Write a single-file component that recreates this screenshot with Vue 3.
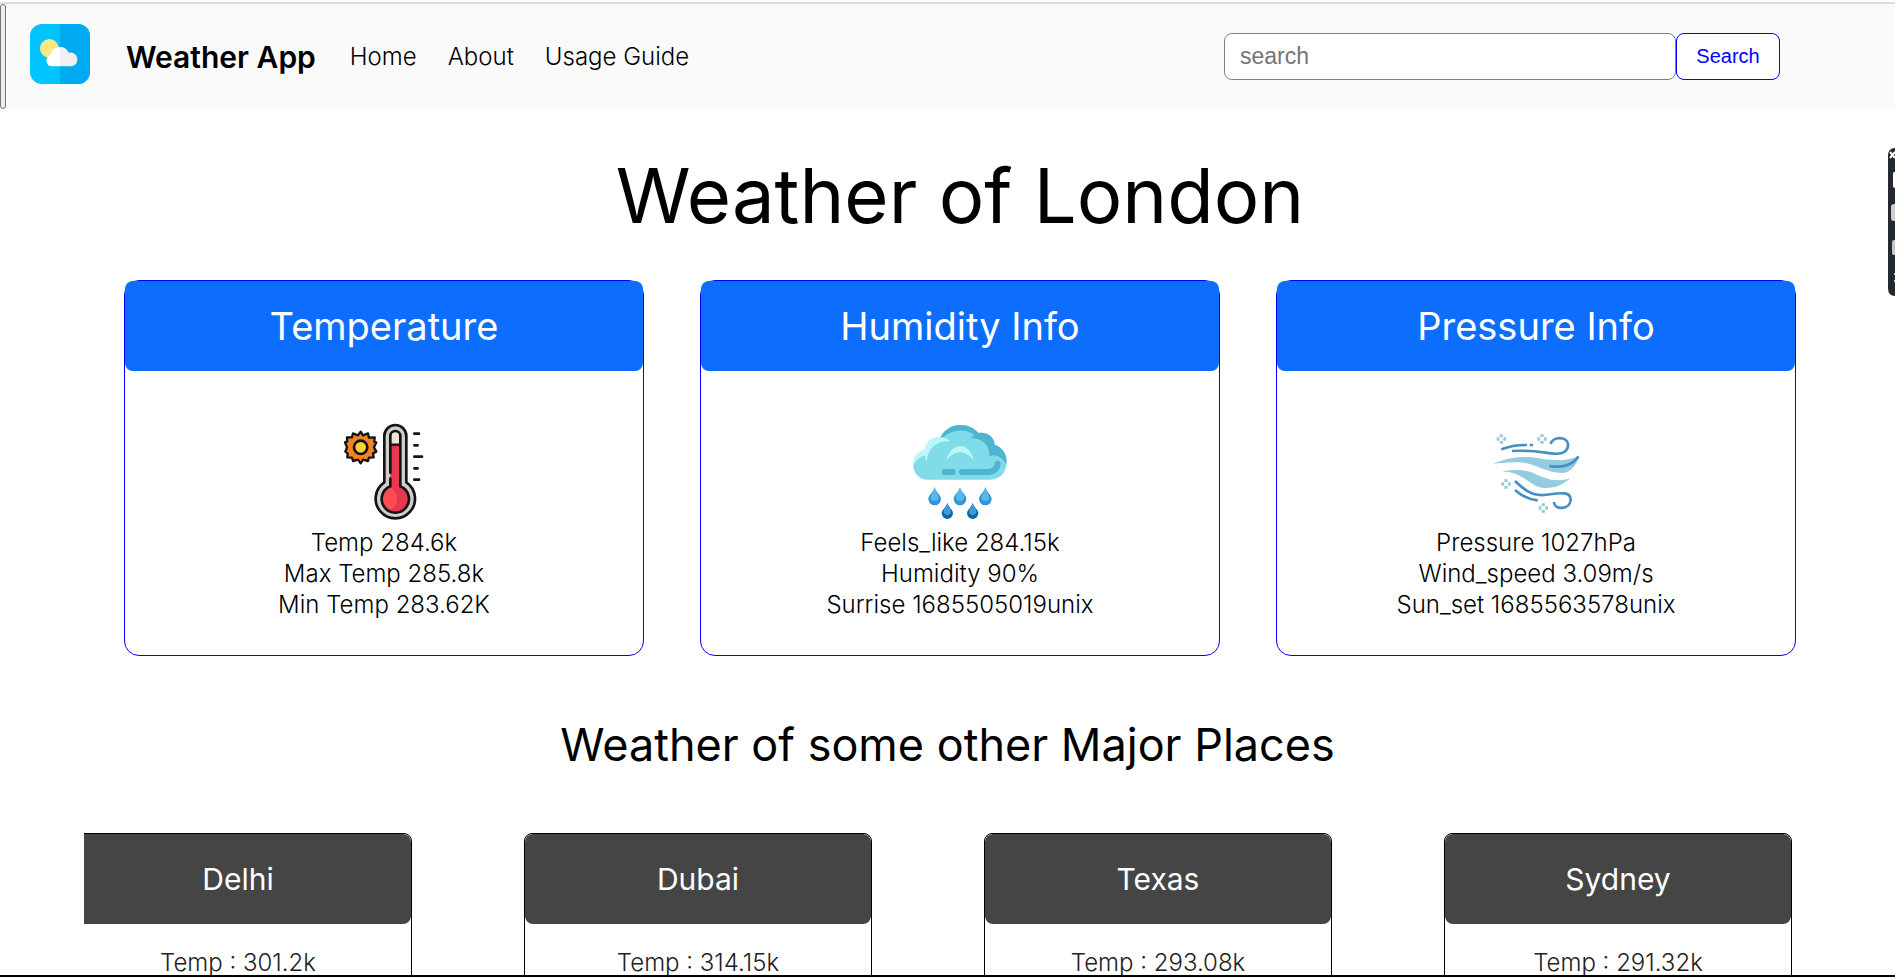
<script setup>
import { ref } from 'vue'

const query = ref('')

const links = ['Home', 'About', 'Usage Guide']

const cards = [
  { title: 'Temperature', icon: 'thermometer', lines: ['Temp 284.6k', 'Max Temp 285.8k', 'Min Temp 283.62K'] },
  { title: 'Humidity Info', icon: 'rain', lines: ['Feels_like 284.15k', 'Humidity 90%', 'Surrise 1685505019unix'] },
  { title: 'Pressure Info', icon: 'wind', lines: ['Pressure 1027hPa', 'Wind_speed 3.09m/s', 'Sun_set 1685563578unix'] },
]

const places = [
  { name: 'Delhi', temp: '301.2k' },
  { name: 'Dubai', temp: '314.15k' },
  { name: 'Texas', temp: '293.08k' },
  { name: 'Sydney', temp: '291.32k' },
]
</script>

<template>
  <div class="page">
    <header class="navbar">
      <button class="toggler" type="button" aria-label="Toggle navigation"></button>
      <a class="logo" href="#" aria-label="Weather App home">
        <svg viewBox="0 0 180 180" width="60" height="60">
          <defs>
            <clipPath id="logo-left"><rect x="0" y="0" width="90" height="180" /></clipPath>
            <clipPath id="logo-right"><rect x="90" y="0" width="90" height="180" /></clipPath>
          </defs>
          <rect width="180" height="180" rx="36" fill="#00c3ff" />
          <path d="M90 0H144A36 36 0 0 1 180 36V144A36 36 0 0 1 144 180H90Z" fill="#00aaf2" />
          <circle cx="58" cy="73" r="28" fill="#ffe783" />
          <g clip-path="url(#logo-left)" fill="#fff">
            <path d="M68 127A17 17 0 0 1 61 94A29 29 0 0 1 116 86A21 21 0 1 1 126 127Z" />
          </g>
          <g clip-path="url(#logo-right)" fill="#f0f0f0">
            <path d="M68 127A17 17 0 0 1 61 94A29 29 0 0 1 116 86A21 21 0 1 1 126 127Z" />
          </g>
        </svg>
      </a>
      <a class="brand" href="#">Weather App</a>
      <nav class="links">
        <a v-for="link in links" :key="link" href="#">{{ link }}</a>
      </nav>
      <form class="search" @submit.prevent>
        <input v-model="query" type="search" placeholder="search" aria-label="Search for a city" />
        <button type="submit">Search</button>
      </form>
    </header>

    <main>
      <section class="current">
        <h1>Weather of London</h1>
        <div class="cards">
          <article v-for="card in cards" :key="card.title" class="card">
            <h2>{{ card.title }}</h2>
            <div class="card-body">
              <svg v-if="card.icon === 'thermometer'" class="icon" viewBox="42 66 300 300" aria-hidden="true">
                <path
                  d="M122 95L129 106L144 100L147 113L164 112L163 126L169 127L162 142L169 155L159 160L161 172L147 173L144 183L129 179L122 190L114 179L99 183L96 173L82 172L83 160L76 155L81 142L75 127L82 124L81 112L96 112L99 100L114 106Z"
                  fill="#f58220" stroke="#141414" stroke-width="7" stroke-linejoin="round" />
                <circle cx="122" cy="142" r="20" fill="#fbd03b" stroke="#141414" stroke-width="8" />
                <path d="M193 108A33 33 0 0 1 259 108V247A59 59 0 1 1 193 247Z" fill="#cfcfd1" stroke="#141414" stroke-width="8" stroke-linejoin="round" />
                <path d="M211 108A15 15 0 0 1 241 108V259A41 41 0 1 1 211 259Z" fill="#e7384d" />
                <path d="M211 134V108A15 15 0 0 1 241 108V134Z" fill="#f1e5d8" />
                <path d="M211 262A37 37 0 0 0 211 330Q231 318 231 296T211 262Z" fill="#ff4c55" />
                <path d="M211 134H241" stroke="#141414" stroke-width="7" />
                <path d="M211 218V108A15 15 0 0 1 241 108V259A41 41 0 1 1 211 259V236" fill="none" stroke="#141414" stroke-width="8" stroke-linecap="round" />
                <path d="M283 101H297M283 136H293M283 170H306M283 205H293M283 239H297" stroke="#141414" stroke-width="8" stroke-linecap="round" />
              </svg>

              <svg v-else-if="card.icon === 'rain'" class="icon" viewBox="60 66 300 300" aria-hidden="true">
                <path d="M112 239A42 42 0 0 1 70 196C70 169 86 153 105 150C107 124 128 110 151 112C164 88 186 75 210 75C235 75 253 84 265 99C292 95 312 110 314 134C335 141 350 159 350 187C350 217 329 239 300 239Z" fill="#80dce8" />
                <path d="M151 112C164 88 186 75 210 75C235 75 253 84 265 99C292 95 312 110 314 134C335 141 350 159 350 187L347 193C343 180 328 166 308 166L298 169C299 140 284 116 241 114C249 107 252 106 253 104C226 85 184 87 161 112Z" fill="#4eb5d0" />
                <path d="M70 199C70 169 86 153 105 150C107 124 128 110 151 112C164 112 174 117 180 124C143 120 113 143 111 184C108 180 106 173 106 167C89 168 76 181 70 199Z" fill="#b9f7f8" />
                <path d="M170 180C177 151 194 138 211 138C229 138 244 151 250 180C226 149 194 149 170 180Z" fill="#b9f7f8" />
                <path d="M164 216H188M216 216H288Q321 216 323 191" fill="none" stroke="#4eb5d0" stroke-width="18" stroke-linecap="round" />
                <g v-for="x in [134, 210, 286]" :key="x" :transform="`translate(${x} 262)`">
                  <path d="M0 0C4 16 19 23 19 35A19 19 0 0 1 -19 35C-19 23 -4 16 0 0Z" fill="#3196d3" />
                  <path d="M0 0C4 16 12 22 12 29A12 12 0 0 1 -12 29C-12 22 -4 16 0 0Z" fill="#58b8ea" />
                </g>
                <g v-for="x in [172, 248]" :key="x" :transform="`translate(${x} 309)`">
                  <path d="M0 0C4 14 17 20 17 31A17 17 0 0 1 -17 31C-17 20 -4 14 0 0Z" fill="#086ba8" />
                  <path d="M0 0C4 14 11 18 11 25A11 11 0 0 1 -11 25C-11 18 -4 14 0 0Z" fill="#3e9bd7" />
                </g>
              </svg>

              <svg v-else class="icon" viewBox="48 66 300 300" aria-hidden="true">
                <path d="M67 192C106 175 139 169 177 171C222 175 274 193 328 167C318 198 300 220 274 219C228 219 190 185 140 187Q99 187 67 192Z" fill="#92ccdd" />
                <path d="M96 214C133 208 163 208 184 217C217 231 248 251 301 235C278 256 253 265 224 264C181 263 167 218 96 214Z" fill="#92ccdd" />
                <g fill="none" stroke="#468fc2" stroke-width="8">
                  <path d="M94 148Q131 134 171 135M179 135H189" />
                  <path d="M126 153C186 149 220 158 253 161C282 163 295 151 294 133C292 108 247 109 242 132" />
                  <path d="M238 198C276 204 310 195 325 169" />
                  <path d="M135 243C161 268 184 287 221 285C251 283 304 268 302 300C300 331 251 330 252 306" />
                  <path d="M135 270Q168 299 203 301" />
                </g>
                <g v-for="p in [[94, 117], [216, 117], [108, 252], [220, 324]]" :key="p.join()" :transform="`translate(${p[0]} ${p[1]})`" fill="#92ccdd">
                  <path d="M-5 -14H5V-6H-5ZM-5 6H5V14H-5ZM-14 -5H-6V5H-14ZM6 -5H14V5H6Z" />
                </g>
              </svg>
              <p v-for="line in card.lines" :key="line">{{ line }}</p>
            </div>
          </article>
        </div>
      </section>

      <section class="others">
        <h2 class="others-title">Weather of some other Major Places</h2>
        <div class="carousel">
          <div class="track">
            <article v-for="place in places" :key="place.name" class="place">
              <h3>{{ place.name }}</h3>
              <p>Temp : {{ place.temp }}</p>
            </article>
          </div>
        </div>
      </section>
    </main>

    <aside class="dock" aria-hidden="true">
      <svg viewBox="0 0 7 148" width="7" height="148">
        <path d="M7 0Q0 0 0 8V140Q0 148 7 148Z" fill="#23292e" />
        <path d="M2 4L7 10M2 10L7 4" stroke="#fff" stroke-width="2" />
        <path d="M7 24H6Q5 24 5 26V38Q5 40 7 40Z" fill="#fff" />
        <path d="M7 56H6Q3 56 3 59V70Q3 73 6 73H7Z" fill="#cfcfcf" />
        <path d="M7 92H6Q4 92 4 94V105Q4 107 7 107Z" fill="#c4c4c4" />
        <circle cx="7" cy="126" r="1" fill="#fff" />
        <circle cx="7" cy="133" r="1" fill="#fff" />
      </svg>
    </aside>
  </div>
</template>

<style>
body {
  background: #fff;
}
</style>

<style scoped>
.page {
  box-sizing: border-box;
  height: 100vh;
  overflow: hidden;
  padding-top: 2px;
  border-bottom: 2px solid #000;
  background: #fff;
  color: #000;
  font-family: Inter, "Liberation Sans", sans-serif;
  font-size: 24px;
  font-weight: 300;
}

h1,
h2,
h3,
p {
  margin: 0;
  font-weight: 400;
}

.navbar {
  display: flex;
  align-items: center;
  height: 105px;
  padding-right: 115px;
  border-top: 2px solid #dcdcdc;
  background: #fafafa;
}

.navbar a {
  color: #000;
  text-decoration: none;
}

.toggler {
  align-self: stretch;
  width: 6px;
  padding: 0;
  border: 1px solid #767676;
  border-radius: 3px;
  background: #efefef;
}

.logo {
  margin: 0 36px 6px 24px;
  line-height: 0;
}

.navbar .brand {
  margin-right: 34px;
  font-size: 30px;
  font-weight: 600;
}

.links {
  display: flex;
  flex: 1;
  gap: 31px;
}

.search {
  display: flex;
}

.search input,
.search button {
  box-sizing: border-box;
  height: 47px;
  border-radius: 8px;
  background: #fff;
  font-family: "Liberation Sans", Arial, sans-serif;
}

.search input {
  width: 452px;
  padding: 0 15px;
  border: 1px solid #808080;
  font-size: 23px;
  appearance: none;
}

.search input::placeholder {
  color: #757575;
}

.search button {
  width: 104px;
  padding: 0;
  border: 1px solid #00f;
  color: #00f;
  font-size: 20px;
}

.current {
  padding: 40px 99px 0 124px;
  text-align: center;
}

h1 {
  font-size: 76px;
  line-height: 92px;
}

.cards {
  display: grid;
  grid-template-columns: repeat(3, 1fr);
  gap: 56px;
  margin-top: 39px;
}

.card {
  border: 1px solid #00f;
  border-radius: 15px;
}

.card h2 {
  border-radius: 8px;
  background: #0d6efd;
  color: #fff;
  font-size: 38px;
  line-height: 90px;
}

.card-body {
  padding: 51px 16px 35px;
}

.icon {
  display: block;
  width: 100px;
  height: 100px;
  margin: 0 auto 5px;
}

.card-body p {
  font-weight: 300;
  line-height: 31px;
}

.others-title {
  margin: 59px 0 58px;
  font-size: 45px;
  line-height: 60px;
  text-align: center;
}

.carousel {
  margin: 0 84px;
  overflow: hidden;
}

.track {
  display: grid;
  grid-template-columns: repeat(4, 1fr);
  gap: 112px;
  margin: 0 19px 0 -20px;
}

.place {
  height: 300px;
  border: 1px solid #000;
  border-radius: 8px;
  text-align: center;
}

.place h3 {
  border-radius: 8px;
  background: #454545;
  color: #fff;
  font-size: 30px;
  line-height: 90px;
}

.place p {
  margin-top: 23px;
  color: #222;
  font-weight: 300;
  line-height: 31px;
}

.dock {
  position: absolute;
  top: 148px;
  right: 0;
  line-height: 0;
}
</style>
